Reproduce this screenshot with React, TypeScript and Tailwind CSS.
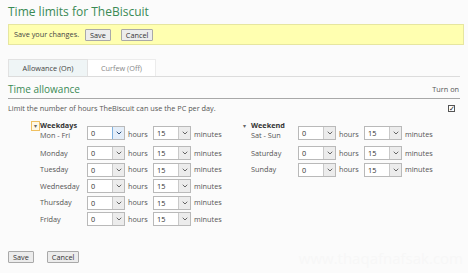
import { ChevronDown } from 'lucide-react'

// ============================================================================
// Small pieces
// ============================================================================

function Button({ label, className = '' }: { label: string; className?: string }) {
  return (
    <button
      type="button"
      className={`h-[12px] px-[4px] leading-[10px] border border-[#a9a9a9] bg-[#ececec] text-[7.3px] text-[#333] rounded-[1px] ${className}`}
    >
      {label}
    </button>
  )
}

function Dropdown({ value, focused = false }: { value: string; focused?: boolean }) {
  return (
    <div className="flex h-[14px] w-[38px] border border-[#b9b9b9] bg-white">
      <span className="flex-1 pl-[3px] leading-[12px] text-[#333]">{value}</span>
      <span
        className={`flex w-[12px] items-center justify-center border-l ${
          focused ? 'border-[#7fb1df] bg-[#e4eef9]' : 'border-[#c9c9c9] bg-[#ececec]'
        }`}
      >
        <ChevronDown
          size={8}
          strokeWidth={3}
          className={focused ? 'text-[#2b4f7f]' : 'text-[#666]'}
        />
      </span>
    </div>
  )
}

function TimeRow({ label, focused = false }: { label: string; focused?: boolean }) {
  return (
    <div className="flex h-[16.5px] items-center">
      <span className="w-[47px]">{label}</span>
      <Dropdown value="0" focused={focused} />
      <span className="ml-[3px] w-[25px]">hours</span>
      <Dropdown value="15" />
      <span className="ml-[3px]">minutes</span>
    </div>
  )
}

function GroupHeader({ title, sub }: { title: string; sub: string }) {
  return (
    <div className="flex items-end">
      <div className="flex w-[47px] flex-col leading-[9.5px]">
        <span className="font-bold text-[#333]">{title}</span>
        <span>{sub}</span>
      </div>
      <Dropdown value="0" focused={title === 'Weekdays'} />
      <span className="ml-[3px] w-[25px]">hours</span>
      <Dropdown value="15" />
      <span className="ml-[3px]">minutes</span>
    </div>
  )
}

// ============================================================================
// App
// ============================================================================

export default function App() {
  const weekdays = ['Monday', 'Tuesday', 'Wednesday', 'Thursday', 'Friday']
  const weekend = ['Saturday', 'Sunday']

  return (
    <div className="relative h-[273px] w-[468px] overflow-hidden bg-[#fbfbfb] px-[8px] pt-[3px] font-['Open_Sans',sans-serif] text-[7.3px] text-[#555]">
      <h1 className="text-[12px] leading-[18px] text-[#3a8a55]">
        Time limits for TheBiscuit
      </h1>

      {/* Unsaved changes bar */}
      <div className="mt-[3px] flex h-[21px] w-[456px] items-center border border-[#e6e6a0] bg-[#ffffb0] pl-[5px]">
        <span className="mr-[6px] text-[#444]">Save your changes.</span>
        <Button label="Save" />
        <span className="w-[10px]" />
        <Button label="Cancel" />
      </div>

      {/* Tabs */}
      <div className="mt-[14px] flex h-[18px] border-b border-[#dcdcdc]">
        <div className="flex w-[80px] items-center justify-center border border-b-0 border-[#e2e2e2] bg-[#eff5f6] text-[#444]">
          Allowance (On)
        </div>
        <div className="flex w-[68px] items-center justify-center border border-l-0 border-b-0 border-[#ececec] bg-white text-[#888]">
          Curfew (Off)
        </div>
      </div>

      {/* Section heading */}
      <div className="mt-[3px] flex h-[19px] items-center justify-between border-b border-[#a8a8a8] pr-[1px]">
        <span className="text-[10px] text-[#3a8a55]">Time allowance</span>
        <span className="text-[#555]">Turn on</span>
      </div>

      <div className="mt-[3px] flex h-[12px] items-center justify-between pr-[5px]">
        <span>Limit the number of hours TheBiscuit can use the PC per day.</span>
        <span className="flex h-[7px] w-[7px] items-center justify-center border border-[#555] bg-white text-[7px] leading-none text-[#222]">
          ✓
        </span>
      </div>

      {/* Allowance grid */}
      <div className="mt-[7px] flex">
        <div className="ml-[23px] flex w-[212px] items-start">
          <span className="flex h-[10px] w-[9px] shrink-0 items-start justify-center border border-[#f0c060] bg-[#fff8e6] text-[6px] leading-[8px] text-[#666]">
            ▾
          </span>
          <div className="flex flex-col">
            <GroupHeader title="Weekdays" sub="Mon - Fri" />
            <div className="mt-[5px] flex flex-col">
              {weekdays.map((d) => (
                <TimeRow key={d} label={d} />
              ))}
            </div>
          </div>
        </div>
        <div className="flex items-start">
          <span className="mt-[1px] w-[8px] text-[6px] leading-[8px] text-[#666]">▾</span>
          <div className="flex flex-col">
            <GroupHeader title="Weekend" sub="Sat - Sun" />
            <div className="mt-[5px] flex flex-col">
              {weekend.map((d) => (
                <TimeRow key={d} label={d} />
              ))}
            </div>
          </div>
        </div>
      </div>

      <div className="mt-[23px] flex gap-[13px]">
        <Button label="Save" />
        <Button label="Cancel" />
      </div>

      <span className="absolute bottom-[4px] right-[5px] text-[15px] text-[#f7f7f7]">
        www.thaqafnafsak.com
      </span>
    </div>
  )
}
